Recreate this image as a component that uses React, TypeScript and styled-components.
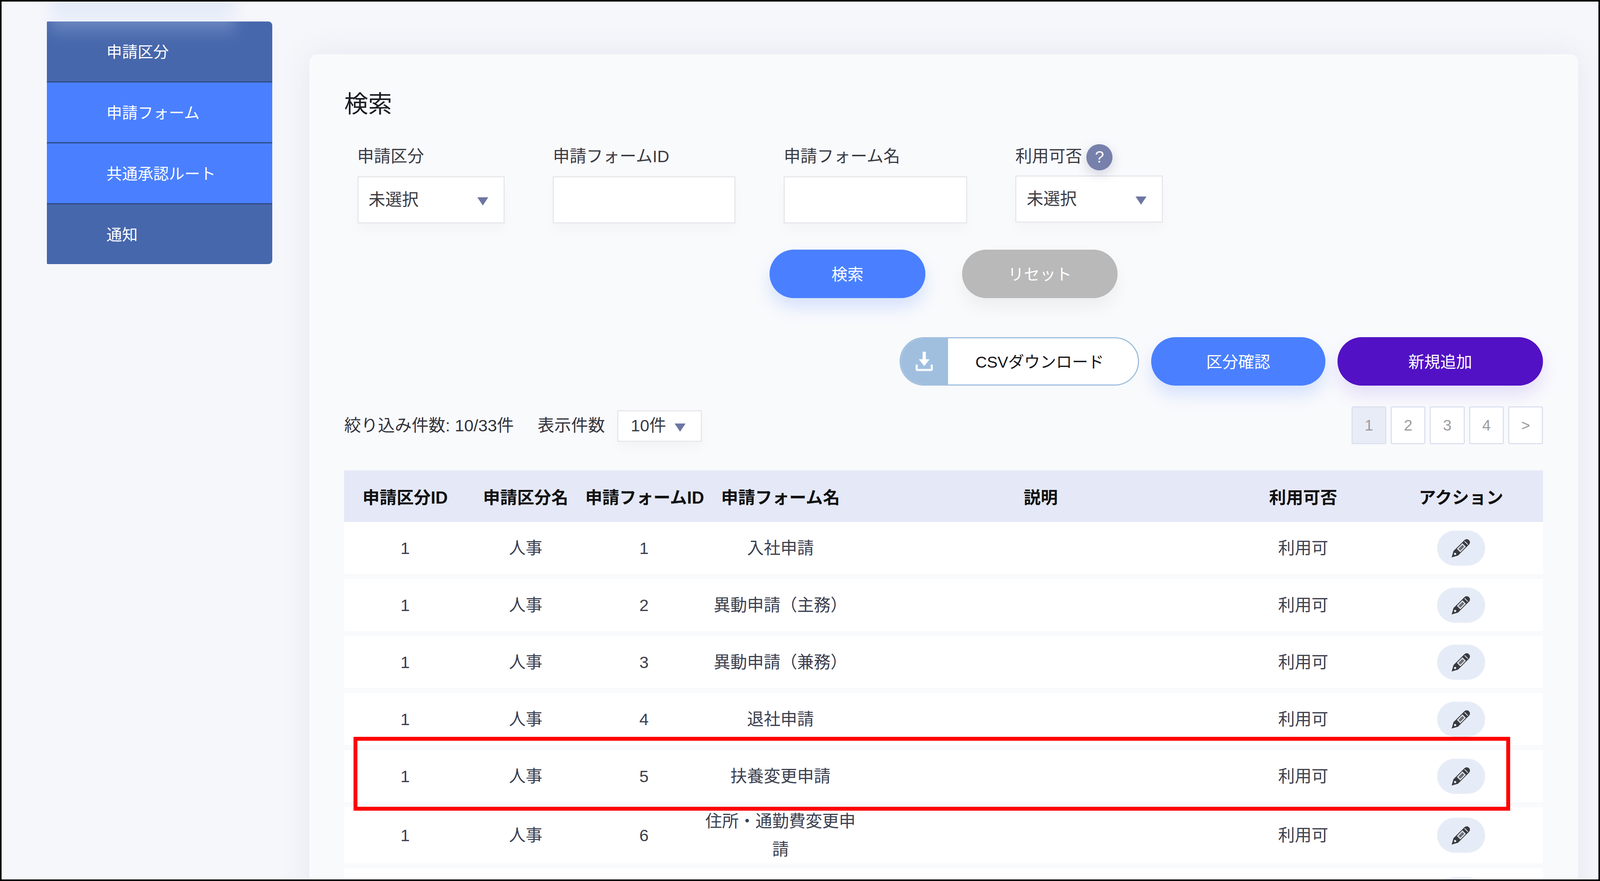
import React from 'react';
import styled, { createGlobalStyle } from 'styled-components';

// widths follow the window, the reference was 4408 wide
const w = (n: number) => `${(n / 4408) * 100}vw`;

const GlobalStyle = createGlobalStyle`
  html, body {
    margin: 0;
    padding: 0;
    background: #f6f7fb;
  }
  * {
    box-sizing: border-box;
  }
`;

const Screen = styled.div`
  position: relative;
  width: 100vw;
  height: 100vh;
  overflow: hidden;
  border: 4px solid #000;
  background: #f6f7fb;
  display: flex;
  align-items: flex-start;
  gap: ${w(102)};
  padding: 51px 0 0 ${w(125)};
  font-family: 'Liberation Sans', 'Noto Sans CJK JP', sans-serif;
  font-size: ${w(45)};
  color: #3c404f;
`;

const TopGlow = styled.div`
  position: absolute;
  top: -20px;
  left: ${w(135)};
  width: ${w(510)};
  height: 120px;
  background: linear-gradient(to bottom, rgba(210, 222, 248, 0.62), rgba(210, 222, 248, 0));
  filter: blur(18px);
  pointer-events: none;
`;

const Sidebar = styled.nav`
  width: ${w(621)};
  flex: none;
  border-radius: 2px 10px 10px 2px;
  overflow: hidden;
`;

const SideItem = styled.div<{ $active?: boolean }>`
  height: 156px;
  display: flex;
  align-items: center;
  padding: 0 0 4px ${w(164)};
  font-size: ${w(43)};
  color: #fff;
  background: ${(p) => (p.$active ? '#4a80ff' : '#4667ac')};
  border-bottom: 3px solid #2f4a85;
  &:last-child {
    height: 153px;
    border-bottom: 0;
  }
`;

const Card = styled.main`
  width: ${w(3496)};
  height: 2200px;
  flex: none;
  margin-top: 84px;
  padding: 88px ${w(97)} 0 ${w(96)};
  background: #f9fafc;
  border-radius: 20px;
  box-shadow: 0 0 80px rgba(70, 85, 150, 0.1);
`;

const Title = styled.h2`
  margin: 0;
  font-size: ${w(66)};
  line-height: 80px;
  font-weight: 400;
  color: #1b1b22;
`;

const SearchForm = styled.form`
  display: flex;
  align-items: flex-start;
  gap: ${w(133)};
  margin-top: 62px;
  padding-left: ${w(36)};
`;

const Field = styled.div<{ $width: number }>`
  width: ${(p) => w(p.$width)};
  flex: none;
`;

const FieldLabel = styled.div<{ $tight?: boolean }>`
  display: flex;
  align-items: center;
  gap: ${w(12)};
  height: 66px;
  margin-top: -6px;
  margin-bottom: ${(p) => (p.$tight ? '20px' : '22px')};
  font-size: ${w(46)};
  color: #3a3a42;
`;

const HelpMark = styled.span`
  width: 67px;
  height: 67px;
  margin-top: 12px;
  border-radius: 50%;
  display: flex;
  align-items: center;
  justify-content: center;
  background: #7680ab;
  color: #fff;
  font-size: 42px;
  box-shadow: 0 10px 30px rgba(70, 75, 120, 0.22);
`;

const TextBox = styled.div`
  height: 121px;
  background: #fff;
  border: 3px solid #e8e8ec;
  box-shadow: 0 18px 28px rgba(0, 0, 0, 0.025);
`;

const SelectBox = styled.div<{ $height: number; $left: number; $right: number }>`
  height: ${(p) => p.$height}px;
  display: flex;
  align-items: center;
  justify-content: space-between;
  padding: 0 ${(p) => w(p.$right)} 10px ${(p) => w(p.$left)};
  background: #fff;
  border: 3px solid #e8e8ec;
  box-shadow: 0 18px 28px rgba(0, 0, 0, 0.025);
  font-size: ${w(46)};
  color: #3a3a42;
`;

const Caret = styled.span`
  width: 0;
  height: 0;
  margin-top: 18px;
  border-left: ${w(16)} solid transparent;
  border-right: ${w(16)} solid transparent;
  border-top: 21px solid #6d76a3;
`;

const CenterButtons = styled.div`
  display: flex;
  justify-content: center;
  gap: ${w(101)};
  margin-top: 67px;
`;

const Pill = styled.button<{ $width: number; $tone: 'blue' | 'gray' | 'violet' }>`
  width: ${(p) => w(p.$width)};
  height: 124px;
  padding: 0 0 4px;
  border: 0;
  border-radius: 62px;
  font: inherit;
  font-size: ${w(44)};
  color: #fff;
  background: ${(p) => ({ blue: '#4a80ff', gray: '#b9b9b9', violet: '#5211c4' })[p.$tone]};
  box-shadow: 0 24px 44px
    ${(p) =>
      ({
        blue: 'rgba(74, 128, 255, 0.2)',
        gray: 'rgba(0, 0, 0, 0.05)',
        violet: 'rgba(90, 40, 230, 0.13)',
      })[p.$tone]};
`;

const ActionRow = styled.div`
  display: flex;
  justify-content: flex-end;
  gap: ${w(33)};
  margin-top: 100px;
`;

const CsvButton = styled.button`
  width: ${w(660)};
  height: 124px;
  padding: 0;
  display: flex;
  overflow: hidden;
  border: 3px solid #a0bfdf;
  border-radius: 62px;
  background: #fff;
  font: inherit;
  font-size: ${w(44)};
  color: #15151a;
`;

const CsvIcon = styled.span`
  width: ${w(130)};
  height: 100%;
  flex: none;
  display: flex;
  align-items: center;
  justify-content: center;
  background: #a0bfdf;
`;

const CsvLabel = styled.span`
  flex: 1;
  display: flex;
  align-items: center;
  justify-content: center;
  padding: 0 ${w(18)} 4px 0;
`;

const CountRow = styled.div`
  display: flex;
  align-items: center;
  justify-content: space-between;
  height: 97px;
  margin-top: 53px;
`;

const CountGroup = styled.div`
  display: flex;
  align-items: center;
  font-size: ${w(46.5)};
  color: #33333b;
`;

const CountText = styled.span<{ $gap: number }>`
  margin-right: ${(p) => w(p.$gap)};
  padding-bottom: 8px;
`;

const PageSizeSelect = styled(SelectBox)`
  width: ${w(233)};
  margin-top: 3px;
`;

const Pager = styled.div`
  display: flex;
  gap: ${w(12)};
`;

const PageCell = styled.span<{ $current?: boolean }>`
  width: ${w(96)};
  height: 97px;
  display: flex;
  align-items: center;
  justify-content: center;
  border: 3px solid #dde1f0;
  border-radius: 4px;
  background: ${(p) => (p.$current ? '#e8ecf6' : '#fff')};
  font-size: ${w(42)};
  color: #9a9a9e;
`;

const COLUMNS = [336, 328, 324, 428, 1006, 440, 430].map(w).join(' ');

const TableHead = styled.div`
  display: grid;
  grid-template-columns: ${COLUMNS};
  align-items: center;
  height: 132px;
  margin-top: 67px;
  background: #e5e8f6;
  font-size: ${w(47)};
  font-weight: 700;
  color: #111;
  text-align: center;
  white-space: nowrap;
`;

const TableRow = styled.div`
  display: grid;
  grid-template-columns: ${COLUMNS};
  align-items: center;
  min-height: 133px;
  margin-bottom: 13px;
  background: #fff;
  text-align: center;
  font-size: ${w(46)};
  line-height: 72px;
  color: #3c404f;
`;

const EditButton = styled.button`
  width: ${w(132)};
  height: 90px;
  margin: 0 auto;
  padding: 0;
  display: flex;
  align-items: center;
  justify-content: center;
  border: 0;
  border-radius: 45px;
  background: #e6ecf7;
`;

const Highlight = styled.div`
  position: absolute;
  left: ${w(970)};
  top: 1882px;
  width: ${w(3186)};
  height: 189px;
  border: 10px solid #f00;
  pointer-events: none;
`;

const DownloadIcon = () => (
  <svg width="46" height="52" viewBox="0 0 50 56">
    <path d="M20.5 1h9v21h10.5L25 41 10 22h10.5z" fill="#fff" />
    <path d="M4 37v13a2 2 0 0 0 2 2h38a2 2 0 0 0 2-2V37" fill="none" stroke="#fff" strokeWidth="6" opacity="0.9" />
  </svg>
);

const PencilIcon = () => (
  <svg width="52" height="52" viewBox="0 0 24 24">
    <path
      d="M1 23l2.2-7.6L16 2.6c1.7-1.6 4-1.6 5.4-.1l.2.2c1.5 1.5 1.4 3.7-.2 5.3L8.6 20.8z"
      fill="#3a3b40"
    />
    <path d="M16.3 3.9l3.9 3.9" stroke="#e6ecf7" strokeWidth="0.9" />
    <path d="M16.88 10.22L13.78 7.12 8.12 12.78l3.1 3.1z" fill="#6b6d74" stroke="#dfe3ec" strokeWidth="1.3" />
    <circle cx="5.1" cy="18.8" r="1.3" fill="#e6ecf7" />
  </svg>
);

const menu = [
  { label: '申請区分' },
  { label: '申請フォーム', active: true },
  { label: '共通承認ルート', active: true },
  { label: '通知' },
];

const rows = [
  { id: '1', kind: '人事', formId: '1', name: '入社申請', usable: '利用可' },
  { id: '1', kind: '人事', formId: '2', name: '異動申請（主務）', usable: '利用可' },
  { id: '1', kind: '人事', formId: '3', name: '異動申請（兼務）', usable: '利用可' },
  { id: '1', kind: '人事', formId: '4', name: '退社申請', usable: '利用可' },
  { id: '1', kind: '人事', formId: '5', name: '扶養変更申請', usable: '利用可' },
  { id: '1', kind: '人事', formId: '6', name: '住所・通勤費変更申請', usable: '利用可' },
  { id: '', kind: '', formId: '', name: '', usable: '' },
];

const heads = ['申請区分ID', '申請区分名', '申請フォームID', '申請フォーム名', '説明', '利用可否', 'アクション'];

export default function App() {
  return (
    <Screen>
      <GlobalStyle />
      <Sidebar>
        {menu.map((m) => (
          <SideItem key={m.label} $active={m.active}>
            {m.label}
          </SideItem>
        ))}
      </Sidebar>
      <Card>
        <Title>検索</Title>
        <SearchForm>
          <Field $width={406}>
            <FieldLabel>申請区分</FieldLabel>
            <SelectBox $height={121} $left={28} $right={42}>
              未選択
              <Caret />
            </SelectBox>
          </Field>
          <Field $width={503}>
            <FieldLabel>申請フォームID</FieldLabel>
            <TextBox />
          </Field>
          <Field $width={505}>
            <FieldLabel>申請フォーム名</FieldLabel>
            <TextBox />
          </Field>
          <Field $width={407}>
            <FieldLabel $tight>
              利用可否
              <HelpMark>?</HelpMark>
            </FieldLabel>
            <SelectBox $height={121} $left={28} $right={42}>
              未選択
              <Caret />
            </SelectBox>
          </Field>
        </SearchForm>
        <CenterButtons>
          <Pill type="button" $width={429} $tone="blue">
            検索
          </Pill>
          <Pill type="button" $width={429} $tone="gray">
            リセット
          </Pill>
        </CenterButtons>
        <ActionRow>
          <CsvButton type="button">
            <CsvIcon>
              <DownloadIcon />
            </CsvIcon>
            <CsvLabel>CSVダウンロード</CsvLabel>
          </CsvButton>
          <Pill type="button" $width={480} $tone="blue">
            区分確認
          </Pill>
          <Pill type="button" $width={567} $tone="violet">
            新規追加
          </Pill>
        </ActionRow>
        <CountRow>
          <CountGroup>
            <CountText $gap={65}>絞り込み件数: 10/33件</CountText>
            <CountText $gap={34}>表示件数</CountText>
            <PageSizeSelect $height={81} $left={34} $right={42}>
              10件
              <Caret />
            </PageSizeSelect>
          </CountGroup>
          <Pager>
            <PageCell $current>1</PageCell>
            <PageCell>2</PageCell>
            <PageCell>3</PageCell>
            <PageCell>4</PageCell>
            <PageCell>&gt;</PageCell>
          </Pager>
        </CountRow>
        <TableHead>
          {heads.map((h) => (
            <div key={h}>{h}</div>
          ))}
        </TableHead>
        {rows.map((r, i) => (
          <TableRow key={i}>
            <div>{r.id}</div>
            <div>{r.kind}</div>
            <div>{r.formId}</div>
            <div>{r.name}</div>
            <div />
            <div>{r.usable}</div>
            <EditButton type="button" aria-label="edit">
              <PencilIcon />
            </EditButton>
          </TableRow>
        ))}
      </Card>
      <TopGlow />
      <Highlight />
    </Screen>
  );
}
